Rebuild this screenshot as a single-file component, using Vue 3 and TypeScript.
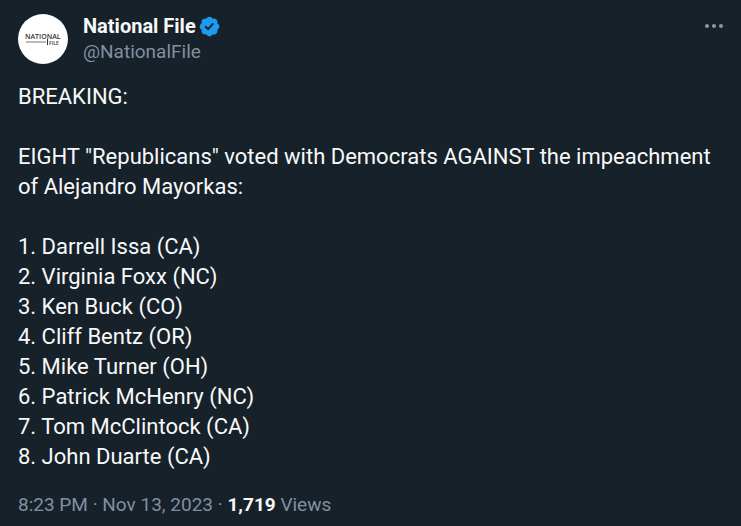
<script setup lang="ts">
interface Representative {
  name: string
  state: string
}

const representatives: Representative[] = [
  { name: 'Darrell Issa', state: 'CA' },
  { name: 'Virginia Foxx', state: 'NC' },
  { name: 'Ken Buck', state: 'CO' },
  { name: 'Cliff Bentz', state: 'OR' },
  { name: 'Mike Turner', state: 'OH' },
  { name: 'Patrick McHenry', state: 'NC' },
  { name: 'Tom McClintock', state: 'CA' },
  { name: 'John Duarte', state: 'CA' },
]
</script>

<template>
  <article class="post">
    <header class="header">
      <a class="avatar" href="#" aria-label="National File">
        <svg viewBox="0 0 50 50" aria-hidden="true">
          <circle cx="25" cy="25" r="25" fill="#fff" />
          <text class="logo-main" x="7" y="25" fill="#333">NATIONAL</text>
          <rect x="8" y="27" width="20" height="2" fill="#b9b9b9" />
          <rect x="29" y="25" width="1" height="6" fill="#333" />
          <text class="logo-sub" x="31" y="31" fill="#333">FILE</text>
        </svg>
      </a>
      <div class="author">
        <a class="name" href="#">
          <span>National File</span>
          <svg class="badge" viewBox="0 0 22 22" role="img" aria-label="Verified account">
            <path
              fill="#1d9bf0"
              d="M20.396 11c-.018-.646-.215-1.275-.57-1.816-.354-.54-.852-.972-1.438-1.246.223-.607.27-1.264.14-1.897-.131-.634-.437-1.218-.882-1.687-.47-.445-1.053-.75-1.687-.882-.633-.13-1.29-.083-1.897.14-.273-.587-.704-1.086-1.245-1.44S11.647 1.62 11 1.604c-.646.017-1.273.213-1.813.568s-.969.854-1.24 1.44c-.608-.223-1.267-.272-1.902-.14-.635.13-1.22.436-1.69.882-.445.47-.749 1.055-.878 1.688-.13.633-.08 1.29.144 1.896-.587.274-1.087.705-1.443 1.245-.356.54-.555 1.17-.574 1.817.02.647.218 1.276.574 1.817.356.54.856.972 1.443 1.245-.224.606-.274 1.263-.144 1.896.13.634.433 1.218.877 1.688.47.443 1.054.747 1.687.878.633.132 1.29.084 1.897-.136.274.586.705 1.084 1.246 1.439.54.354 1.17.551 1.816.569.647-.016 1.276-.213 1.817-.567s.972-.854 1.245-1.44c.604.239 1.266.296 1.903.164.636-.132 1.22-.447 1.68-.907.46-.46.776-1.044.908-1.681s.075-1.299-.165-1.903c.586-.274 1.084-.705 1.439-1.246.354-.54.551-1.17.569-1.816zM9.662 14.85l-3.429-3.428 1.293-1.302 2.072 2.072 4.4-4.794 1.347 1.246z"
            />
          </svg>
        </a>
        <a class="handle" href="#">@NationalFile</a>
      </div>
      <button class="more" type="button" aria-label="More">
        <svg viewBox="0 0 24 24" aria-hidden="true">
          <path
            fill="#8b98a5"
            d="M3 12c0-1.1.9-2 2-2s2 .9 2 2-.9 2-2 2-2-.9-2-2zm9 2c1.1 0 2-.9 2-2s-.9-2-2-2-2 .9-2 2 .9 2 2 2zm7 0c1.1 0 2-.9 2-2s-.9-2-2-2-2 .9-2 2 .9 2 2 2z"
          />
        </svg>
      </button>
    </header>

    <div class="body">
      <p>BREAKING:</p>
      <p>EIGHT "Republicans" voted with Democrats AGAINST the impeachment of Alejandro Mayorkas:</p>
      <ol>
        <li v-for="(person, index) in representatives" :key="person.name">
          {{ index + 1 }}. {{ person.name }} ({{ person.state }})
        </li>
      </ol>
    </div>

    <footer class="meta">
      <a href="#"><time datetime="2023-11-13T20:23">8:23 PM · Nov 13, 2023</time></a>
      · <strong>1,719</strong> Views
    </footer>
  </article>
</template>

<style>
body {
  margin: 0;
  background: #17212a;
}
</style>

<style scoped>
.post {
  box-sizing: border-box;
  min-height: 100vh;
  padding: 14px 15px 6px 18px;
  background: #17212a;
  color: #f7f9f9;
  font-family: Roboto, 'Liberation Sans', sans-serif;
}

a {
  color: inherit;
  text-decoration: none;
}

.header {
  display: flex;
  gap: 15px;
}

.avatar,
.avatar svg {
  display: block;
  width: 50px;
  height: 50px;
}

.logo-main {
  font-family: 'Open Sans', sans-serif;
  font-size: 7px;
  font-weight: 600;
}

.logo-sub {
  font-family: 'Open Sans', sans-serif;
  font-size: 5px;
  font-weight: 600;
}

.author {
  display: flex;
  flex: 1;
  flex-direction: column;
  font-size: 20px;
  line-height: 25px;
}

.name {
  display: flex;
  align-items: center;
  gap: 2px;
  font-weight: 700;
}

.badge {
  width: 23px;
  height: 23px;
}

.author .handle,
.meta {
  color: #8190a0;
}

.handle,
.meta {
  font-size: 19px;
}

.more {
  align-self: flex-start;
  padding: 0;
  border: 0;
  background: none;
  cursor: pointer;
}

.more svg {
  display: block;
  width: 24px;
  height: 24px;
}

.body {
  display: flex;
  flex-direction: column;
  gap: 30px;
  margin-top: 18px;
  font-size: 22px;
  line-height: 30px;
}

p,
ol {
  margin: 0;
  padding: 0;
}

ol {
  list-style: none;
}

.meta {
  margin-top: 20px;
  line-height: 25px;
}

strong {
  color: #f7f9f9;
  font-weight: 700;
}
</style>
